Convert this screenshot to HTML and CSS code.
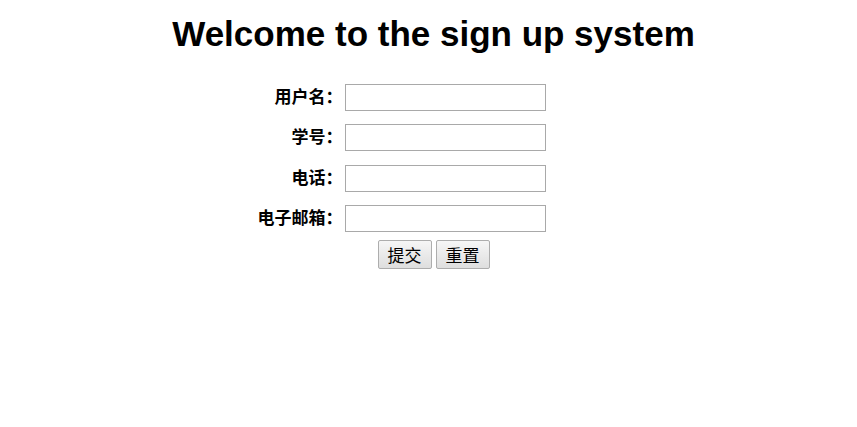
FILE: index.html
```html
<!DOCTYPE html>
<html lang="zh">
<head>
<meta charset="utf-8">
<title>Sign up</title>
<link rel="stylesheet" href="styles.css">
</head>
<body>
<h1 class="title">Welcome to the sign up system</h1>
<form class="signup">
  <div class="grid">
    <label class="lbl" for="u">用户名：</label><input class="field" id="u" type="text"><span class="pad"></span>
    <label class="lbl" for="s">学号：</label><input class="field" id="s" type="text"><span class="pad"></span>
    <label class="lbl" for="p">电话：</label><input class="field" id="p" type="text"><span class="pad"></span>
    <label class="lbl" for="e">电子邮箱：</label><input class="field" id="e" type="text"><span class="pad"></span>
    <div class="actions"><button class="btn" type="submit">提交</button><button class="btn" type="reset">重置</button></div>
  </div>
</form>
</body>
</html>
```
FILE: styles.css
```css
html, body { margin: 0; padding: 0; background: #fff; }
body { padding: 8px 8px 8px 18px; font-family: "Liberation Sans", Arial, "Noto Sans CJK SC", sans-serif; color: #000; }
.title { margin: 6px 0 0; font-size: 35px; font-weight: bold; text-align: center; line-height: 40px; }
.signup { display: flex; justify-content: center; margin-top: 30px; }
.grid { display: grid; grid-template-columns: 85px 201px 62px; column-gap: 2px; row-gap: 13.4px; align-items: center; }
.lbl { text-align: right; font-weight: bold; font-size: 17px; line-height: 24px; margin-top: -3px; font-family: "Noto Sans CJK SC", sans-serif; white-space: nowrap; }
.field { box-sizing: border-box; width: 201px; height: 27px; margin: 0; border: 1px solid #a9a9a9; padding: 1px 2px; }
.actions { grid-column: 1 / 4; display: flex; justify-content: center; gap: 4px; margin-top: -6px; }
.btn { box-sizing: border-box; width: 54px; height: 29px; padding: 0; font-size: 17px; font-family: "Noto Sans CJK SC", sans-serif; border: 1px solid #adadad; border-radius: 2px; background: linear-gradient(#f6f6f6, #dedede); color: #000; }
```
